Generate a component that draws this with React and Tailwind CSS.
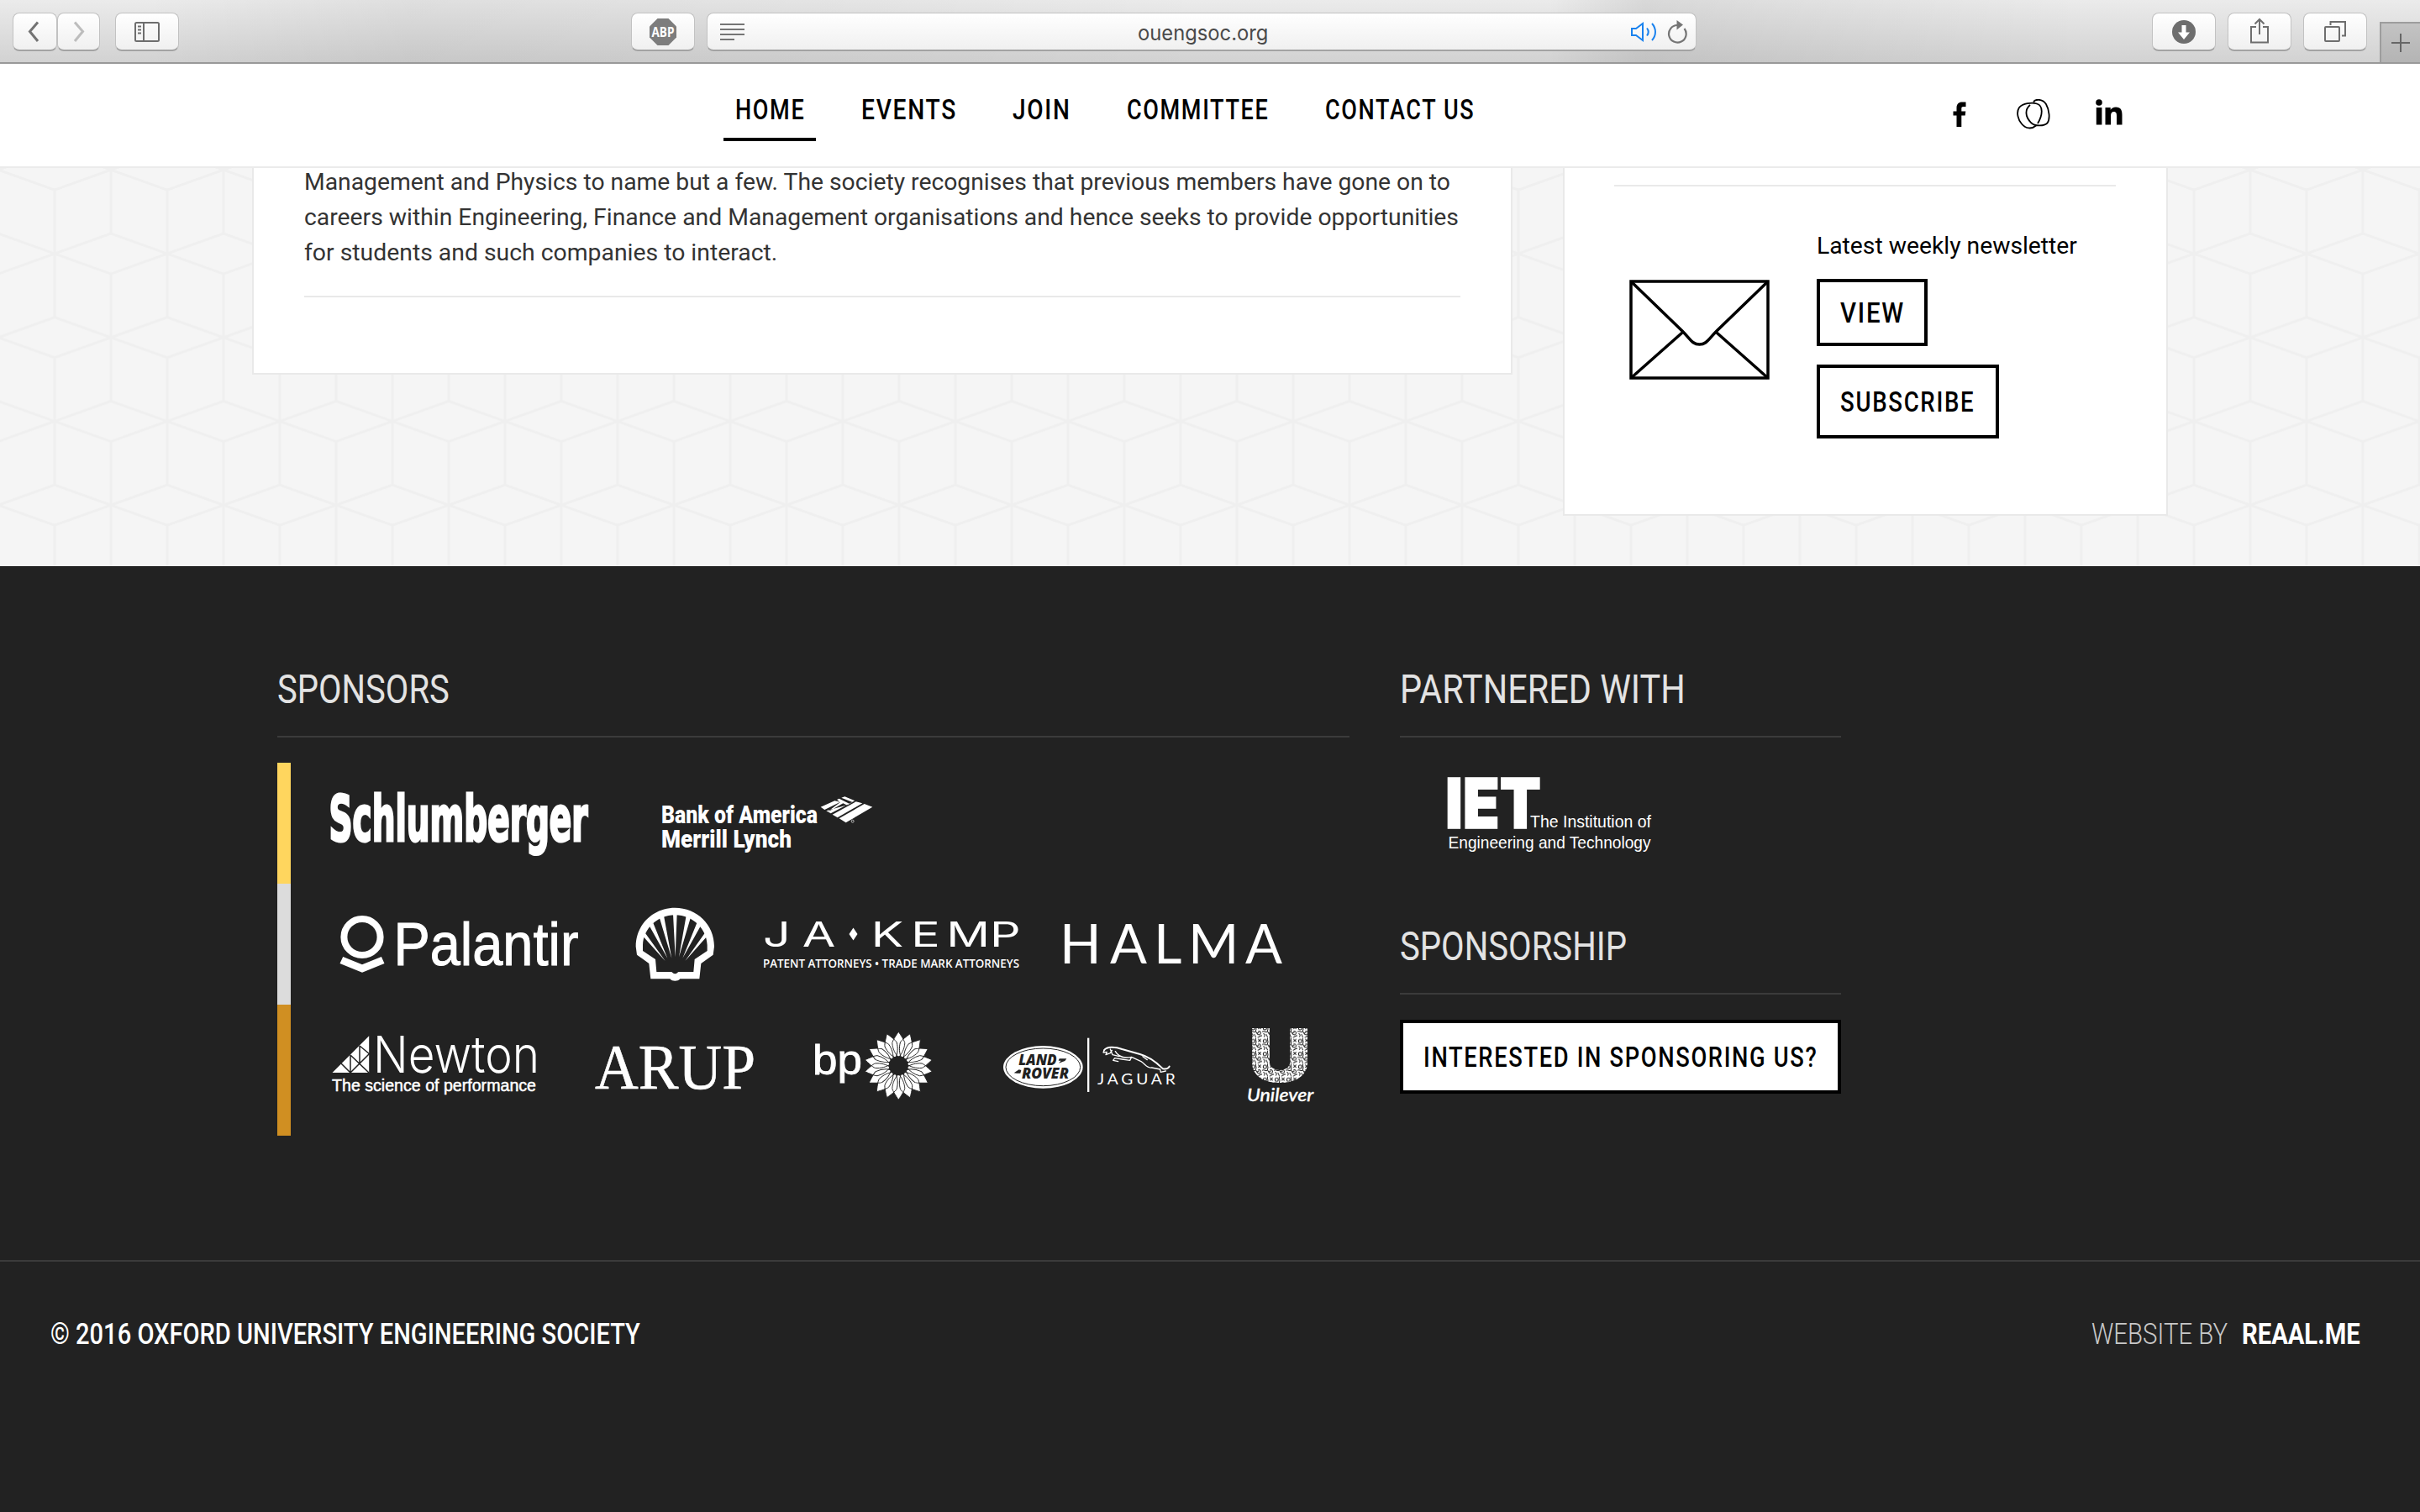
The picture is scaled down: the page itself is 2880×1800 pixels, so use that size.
import React, { useLayoutEffect, useRef } from "react";

/* Condenses a line of text horizontally so that it fills its box. */
function Fit({ children, className = "" }) {
  const box = useRef(null);
  const inner = useRef(null);
  useLayoutEffect(() => {
    const el = inner.current;
    const spacing = parseFloat(getComputedStyle(el).letterSpacing) || 0;
    el.style.transform = `scaleX(${box.current.clientWidth / (el.offsetWidth - spacing)})`;
  }, []);
  return (
    <span ref={box} className={`block whitespace-nowrap ${className}`}>
      <span ref={inner} className="inline-block origin-left">{children}</span>
    </span>
  );
}

/* Logo lettering stretched to a given width. */
function T({ x, y, w, size, children, font = "Liberation Sans", weight = 400, ...rest }) {
  return (
    <text x={x} y={y} textLength={w} lengthAdjust="spacingAndGlyphs" fontSize={size} fontFamily={`"${font}", sans-serif`} fontWeight={weight} {...rest}>
      {children}
    </text>
  );
}

function Logo({ box, label, className, children }) {
  return (
    <svg viewBox={box} role="img" aria-label={label} className={`block shrink-0 overflow-visible fill-white ${className}`}>
      {children}
    </svg>
  );
}

function ToolButton({ className = "", children }) {
  return (
    <button className={`flex h-[46px] shrink-0 items-center justify-center rounded-[8px] border border-b-2 border-[#c2c2c2] border-b-[#a3a3a3] bg-gradient-to-b from-white to-[#f0f0f0] ${className}`}>
      {children}
    </button>
  );
}

function Toolbar() {
  return (
    <header className="flex h-[76px] shrink-0 items-start border-b-2 border-[#999] bg-[linear-gradient(to_right,transparent_6%,rgba(0,0,0,0.05)_17%,rgba(0,0,0,0.03)_33%,transparent_50%,transparent_64%,rgba(0,0,0,0.08)_68%,rgba(0,0,0,0.05)_73%,transparent_86%),linear-gradient(to_bottom,#ebebeb,#d2d2d2)] pt-[15px] pl-[15px]">
      <ToolButton className="w-[53px]">
        <svg className="mr-[4px] h-[26px] w-[14px] fill-none stroke-[#737373]" viewBox="0 0 14 26" strokeWidth="3"><path d="M12 1.500 2.500 12.500 12 24" /></svg>
      </ToolButton>
      <ToolButton className="w-[51px]">
        <svg className="h-[26px] w-[14px] fill-none stroke-[#bdbdbd]" viewBox="0 0 14 26" strokeWidth="3"><path d="M2 1.500 11.500 12.500 2 24" /></svg>
      </ToolButton>
      <ToolButton className="ml-[18px] w-[76px]">
        <svg className="h-[24px] w-[30px] fill-none stroke-[#6e6e6e]" viewBox="0 0 30 24" strokeWidth="2">
          <rect x="1" y="1" width="28" height="22" rx="1.500" />
          <path d="M11 1v22M4 5.500h4M4 9.500h4M4 13.500h4" />
        </svg>
      </ToolButton>
      <ToolButton className="ml-[538px] w-[76px]">
        <svg className="h-[32px] w-[32px]" viewBox="0 0 32 32">
          <path d="M9.500 0h13L32 9.500v13L22.500 32h-13L0 22.500v-13z" className="fill-[#7d7d7d]" />
          <T x="2.500" y="21.500" w="27" size="15.500" font="Open Sans" weight="700" className="fill-white">ABP</T>
        </svg>
      </ToolButton>
      <div className="ml-[14px] flex h-[46px] w-[1178px] items-center rounded-[8px] border border-b-2 border-[#c2c2c2] border-b-[#a3a3a3] bg-gradient-to-b from-white to-[#f0f0f0] pr-[10px] pl-[15px]">
        <svg className="h-[22px] w-[29px] stroke-[#757575]" viewBox="0 0 29 22" strokeWidth="2"><path d="M0 2h29M0 8h29M0 14h29M0 20h17" /></svg>
        <span className="mt-[3px] ml-[468px] w-[155px] font-['Inter'] text-[25px] leading-[40px] text-[#4a4a4a]"><Fit>ouengsoc.org</Fit></span>
        <svg className="ml-auto h-[24px] w-[32px] fill-none stroke-[#1a82ee]" viewBox="0 0 32 24" strokeWidth="2"><path d="M1 8h5l8-6v20l-8-6H1zM19 7.500c2.300 3 2.300 6 0 9M25 2c5.300 6 5.300 14 0 20" /></svg>
        <svg className="ml-[11px] h-[28px] w-[24px] fill-none stroke-[#757575]" viewBox="0 0 24 28" strokeWidth="2.200"><path d="M20.500 10A10.300 10.300 0 1 1 12 6" /><path d="M11.500 0v11.500l7.500-6z" className="fill-[#757575] stroke-none" /></svg>
      </div>
      <ToolButton className="ml-[542px] w-[76px]">
        <svg className="h-[28px] w-[28px]" viewBox="0 0 28 28"><circle cx="14" cy="14" r="14" className="fill-[#6e6e6e]" /><path d="M11.500 6h5v8.500h4.500l-7 8.500-7-8.500h4.500z" className="fill-white" /></svg>
      </ToolButton>
      <ToolButton className="ml-[14px] w-[76px]">
        <svg className="mt-[-2px] h-[31px] w-[24px] fill-none stroke-[#6e6e6e]" viewBox="0 0 24 31" strokeWidth="2"><path d="M8 11H2v18.500h20V11h-6M12 20V2M6.500 7.500 12 2l5.500 5.500" /></svg>
      </ToolButton>
      <ToolButton className="ml-[14px] w-[76px]">
        <svg className="h-[25px] w-[26px] fill-none stroke-[#6e6e6e]" viewBox="0 0 26 25" strokeWidth="2"><rect x="1" y="7" width="17" height="17" rx="1" /><path d="M7.500 5V1H25v16.500h-4" /></svg>
      </ToolButton>
      <div className="mt-[11px] ml-[15px] flex h-[48px] flex-1 items-center justify-center border-t-2 border-l-2 border-[#9d9d9d] bg-gradient-to-b from-[#c3c3c3] to-[#b4b4b4]">
        <svg className="h-[22px] w-[22px] stroke-[#666]" viewBox="0 0 22 22" strokeWidth="2"><path d="M11 0v22M0 11h22" /></svg>
      </div>
    </header>
  );
}

const LINKS = [
  { label: "HOME", width: "w-[82px]", active: true },
  { label: "EVENTS", width: "w-[112px]" },
  { label: "JOIN", width: "w-[68px]" },
  { label: "COMMITTEE", width: "w-[168px]" },
  { label: "CONTACT US", width: "w-[177px]" },
];

function Nav() {
  return (
    <nav className="flex h-[124px] shrink-0 border-b-2 border-[#ebebeb] bg-white pl-[861px] font-['Roboto'] text-[33px] leading-[44px] font-medium tracking-[2px] text-black">
      <div className="flex gap-[40px] pt-[33px]">
        {LINKS.map((l) => (
          <a key={l.label} className={`h-[59px] px-[14px] ${l.active ? "border-b-4 border-black" : ""}`}>
            <Fit className={l.width}>{l.label}</Fit>
          </a>
        ))}
      </div>
      <div className="ml-auto flex pt-[42px] pr-[354px]">
        <svg className="mt-[3px] h-[30px] w-[16px] fill-black" viewBox="0 0 16 30"><path d="M15.500.500V6h-3c-1.600 0-2.200.700-2.200 2.200v3.300h5l-.600 5h-4.400V30H4.500V16.500H.500v-5h4V7.400C4.500 3 7 .500 11 .500z" /></svg>
        <svg className="ml-[60px] h-[36px] w-[40px] fill-none stroke-black" viewBox="0 0 40 36" strokeWidth="1.800">
          <path d="M20 3.500C22-.500 31-.500 35 6c4 7 5 18 1.500 22.500C33 32 22 33 17 28 9.500 20 10 12 16 7" />
          <path d="M25 29C31 19 32 8 24 5.500 18 3.500 7 5 3 10-1 16 2 25 6 29.500c5 6 12 6.500 17 2" />
        </svg>
        <svg className="ml-[54px] h-[31px] w-[32px] fill-black" viewBox="0 0 32 31"><circle cx="4" cy="4" r="3.800" /><path d="M.800 10h6.600v20.500H.800zM11.500 10h6.200v2.800c1.200-2 3.300-3.300 6.300-3.300 6 0 7.500 3.700 7.500 9.300v11.700H25V20c0-2.500-.300-5-3.300-5s-3.600 2.400-3.600 5v10.500h-6.600z" /></svg>
      </div>
    </nav>
  );
}

function HexBackdrop() {
  return (
    <svg aria-hidden="true" className="absolute inset-0 h-full w-full">
      <defs>
        <pattern id="cubes" width="134" height="199.600" patternUnits="userSpaceOnUse" x="-2" y="1">
          <g className="fill-none stroke-[#efefef]" strokeWidth="3">
            <path d="M-67 101 0 77l67 24L0 125zM67 101l67-24 67 24-67 24z" />
            <path d="M0 1.200l67-24 67 24-67 24zM0 200.800l67-24 67 24-67 24z" />
            <path d="M67 25v151.600M0 -1v78M0 125v76M134 -1v78M134 125v76" />
          </g>
        </pattern>
      </defs>
      <rect width="100%" height="100%" fill="url(#cubes)" />
    </svg>
  );
}

function Main() {
  return (
    <main className="relative flex h-[474px] shrink-0 items-start overflow-hidden bg-[#f5f5f5] pl-[300px] font-['Roboto'] text-[28px] leading-[42px]">
      <HexBackdrop />
      <article className="relative h-[246px] w-[1500px] border-x-2 border-b-2 border-[#e9e9e9] bg-white px-[60px] text-[#333]">
        <div className="-mt-[4px]">
          <Fit className="w-[1364px]">Management and Physics to name but a few. The society recognises that previous members have gone on to</Fit>
          <Fit className="w-[1374px]">careers within Engineering, Finance and Management organisations and hence seeks to provide opportunities</Fit>
          <Fit className="w-[563px]">for students and such companies to interact.</Fit>
        </div>
        <hr className="mt-[30px] border-t-2 border-[#e9e9e9]" />
      </article>
      <aside className="relative ml-[60px] h-[414px] w-[720px] border-x-2 border-b-2 border-[#e9e9e9] bg-white px-[59px] pt-[20px]">
        <hr className="w-[597px] border-t-2 border-[#e9e9e9]" />
        <div className="flex pt-[50px] pl-[18px] text-black">
          <svg className="mt-[61px] h-[119px] w-[167px] fill-none stroke-black" viewBox="0 0 167 119" strokeWidth="3.500">
            <rect x="2" y="2" width="163" height="115" />
            <path d="M2 2l61 59c10 10 12 16 20.500 16s10.500-6 20.500-16l61-59M2 117l61-54M165 117l-61-54" />
          </svg>
          <div className="ml-[56px]">
            <Fit className="w-[310px]">Latest weekly newsletter</Fit>
            <div className="mt-[18px] flex flex-col items-start gap-[22px] text-[33px] leading-[44px] font-medium tracking-[2px]">
              <button className="h-[80px] w-[132px] border-4 border-black pt-[2px] pl-[24px]"><Fit className="w-[75px]">VIEW</Fit></button>
              <button className="h-[88px] w-[217px] border-4 border-black pt-[2px] pl-[24px]"><Fit className="w-[159px]">SUBSCRIBE</Fit></button>
            </div>
          </div>
        </div>
      </aside>
    </main>
  );
}

function Schlumberger() {
  return (
    <Logo label="Schlumberger" box="390 908 320 144" className="h-[144px] w-[320px]">
      <T x="391.500" y="1001" w="308" size="74" font="DejaVu Sans Condensed" weight="700" className="stroke-white" strokeWidth="3">Schlumberger</T>
    </Logo>
  );
}

function BankOfAmerica() {
  return (
    <Logo label="Bank of America Merrill Lynch" box="780 908 270 144" className="h-[144px] w-[270px]">
      <T x="787" y="980" w="186" size="29" font="Roboto" weight="900">Bank of America</T>
      <T x="787" y="1008.700" w="155" size="29" font="Roboto" weight="900">Merrill Lynch</T>
      <g transform="translate(740 930) scale(0.33333)">
        <path d="M776 133 800 148 895 92 866 81zM752 119 770 130 859 79 836 73zM730 106 746 115 829 71 808 84zM710 92 724 102 780 74 760 70zM768 66 776 62 812 80 802 85 790 79 748 103 736 108 780 75zM784 59 796 55 832 70 822 74z" />
        <circle cx="824" cy="143" r="4.500" className="fill-none stroke-white" strokeWidth="2" />
      </g>
    </Logo>
  );
}

function Palantir() {
  return (
    <Logo label="Palantir" box="400 1052 300 144" className="h-[144px] w-[300px]">
      <circle cx="431" cy="1115.500" r="21.600" className="fill-none stroke-white" strokeWidth="8" />
      <path d="M408.200 1139 431 1148.300 453.900 1139 457.500 1147 431 1157.700 404.500 1147z" />
      <T x="468.500" y="1149.300" w="220" size="72" className="stroke-white" strokeWidth="1">Palantir</T>
    </Logo>
  );
}

function Shell() {
  return (
    <Logo label="Shell" box="750 1052 105 144" className="h-[144px] w-[105px]">
      <g transform="translate(740 930) scale(0.33333)">
        <path fillRule="evenodd" d="M190 452C268 452 330 512 330 590L326 620 283 651 277 706H208C203 713 197 713 190 713S177 713 172 706H103L97 651 54 620 50 590C50 512 112 452 190 452zM190 478C125 478 76 530 75 585V606L120 636 124 681H176C180 681 184 688 190 688S200 681 204 681H256L260 636 305 606V585C304 530 255 478 190 478z" />
        <path d="M183 474h14L191 628zM134 486l16-6L178 632zM230 480l16 6L204 628zM98 516l14-10L163 632zM268 506l14 10L217 632zM74 552l8-12L155 642zM298 540l8 12L226 642z" />
      </g>
    </Logo>
  );
}

function JaKemp() {
  return (
    <Logo label="J A Kemp" box="900 1052 320 144" className="h-[144px] w-[320px]">
      <g transform="translate(0 1126.700) scale(1.400 1)">
        <text x="648.500 682" y="0" fontSize="41" fontFamily='"Inter", sans-serif' fontWeight="400">JA</text>
        <text x="740.500 774.500 804.500 841.500" y="0" fontSize="41" fontFamily='"Inter", sans-serif' fontWeight="400">KEMP</text>
      </g>
      <path d="M1015.500 1104.500l5 7.500-5 7.500-5-7.500z" />
      <T x="908" y="1151.700" w="305" size="14" font="Open Sans" weight="600">PATENT ATTORNEYS • TRADE MARK ATTORNEYS</T>
    </Logo>
  );
}

function Halma() {
  return (
    <Logo label="Halma" box="1255 1052 280 144" className="h-[144px] w-[280px]">
      <text x="1261 1321 1373 1414 1482" y="1147.300" fontSize="65" fontFamily='"Lato", sans-serif' fontWeight="400">HALMA</text>
    </Logo>
  );
}

function Newton() {
  return (
    <Logo label="Newton" box="390 1196 255 156" className="h-[156px] w-[255px]">
      <path d="M395.500 1277 439.200 1233.300V1277z" />
      <path d="M406 1266l11 11 22.500-22.500M417 1256v21M428 1245v21M417 1256l22 21M428 1245l12 10" className="fill-none stroke-[#222]" strokeWidth="1.500" />
      <T x="444" y="1277" w="198" size="61" font="Inter" weight="300">Newton</T>
      <T x="395" y="1299.300" w="243" size="20" className="stroke-white" strokeWidth="0.500">The science of performance</T>
    </Logo>
  );
}

function Arup() {
  return (
    <Logo label="Arup" box="700 1196 205 156" className="h-[156px] w-[205px]">
      <T x="708" y="1296" w="191" size="77" font="Liberation Serif" className="stroke-white" strokeWidth="0.600">ARUP</T>
    </Logo>
  );
}

const PETALS = Array.from({ length: 18 }, (_, i) => i * 20);

function Bp() {
  const petal = "M0 -40.500C3 -36 7 -30 7.500 -27 7 -20 4 -14 0 -10 -4 -14 -7 -20 -7.500 -27 -7 -30 -3 -36 0 -40.500z";
  return (
    <Logo label="BP" box="965 1196 150 156" className="h-[156px] w-[150px]">
      <T x="967" y="1279" w="59" size="50" className="stroke-white" strokeWidth="0.800">bp</T>
      <g transform="translate(1069.300 1268.700)">
        {PETALS.map((a) => <path key={a} d={petal} transform={`rotate(${a})`} />)}
        {PETALS.map((a) => <path key={a} d={petal} transform={`rotate(${a})`} className="fill-none stroke-[#222]" strokeWidth="0.900" />)}
        <circle r="11.500" className="fill-[#222]" />
      </g>
    </Logo>
  );
}

function LandRoverJaguar() {
  return (
    <Logo label="Land Rover Jaguar" box="1190 1196 215 156" className="h-[156px] w-[215px]">
      <g transform="translate(1180 1205) scale(0.33333)">
        <ellipse cx="184" cy="196" rx="142" ry="76" />
        <ellipse cx="184" cy="196" rx="133" ry="67" className="fill-none stroke-[#222]" strokeWidth="3" />
        <g className="fill-[#222]">
          <T x="97" y="188" w="136" size="50" font="Open Sans" weight="800" fontStyle="italic">LAND</T>
          <T x="108" y="236" w="168" size="52" font="Open Sans" weight="800" fontStyle="italic">ROVER</T>
          <path d="M242 166h26l-6 8-22 8 8-9h-9zM80 217l18-12 8 2-3 11H90z" />
        </g>
        <rect x="342" y="92" width="7" height="193" />
        <T x="378" y="259" w="290" size="50" font="Lato" letterSpacing="10">JAGUAR</T>
        <g className="fill-none stroke-white" strokeLinecap="round" strokeLinejoin="round">
          <path strokeWidth="6" d="M402 136C410 122 440 122 466 132L530 150C560 158 590 180 612 202 625 204 632 200 635 194" />
          <path strokeWidth="4" d="M402 136L399 144 412 142 408 152 424 146 430 136M424 132L432 152 456 158M442 140C452 158 470 166 500 160L534 176C548 184 556 202 572 198L602 204M500 160L494 172 466 168 440 164 434 172 452 176M540 158L556 170M602 204L604 214 622 210" />
        </g>
      </g>
    </Logo>
  );
}

function Unilever() {
  return (
    <Logo label="Unilever" box="1480 1196 90 156" className="h-[156px] w-[90px]">
      <defs>
        <pattern id="motifs" width="42" height="46" patternUnits="userSpaceOnUse">
          <rect width="42" height="46" fill="#fff" />
          <g className="fill-none stroke-[#222]" strokeWidth="3">
            <circle cx="10" cy="11" r="6" />
            <path d="M20 0c-4 8 4 10 0 18s6 8 4 14M28 4l10 10M38 4L28 14M0 24c8-6 12 4 18 0M4 30c6 2 8 8 2 12M14 32l6 12M28 22c12-4 12 14 2 12s-4-8 2-8M42 38c-8-2-10 6-16 6" />
          </g>
        </pattern>
      </defs>
      <g transform="translate(1180 1205) scale(0.33333)">
        <T x="916" y="250" w="227" size="264" font="Inter" weight="900" fill="url(#motifs)">U</T>
        <T x="912" y="318" w="238" size="62" font="Lato" weight="500" fontStyle="italic" className="stroke-white" strokeWidth="1">Unilever</T>
      </g>
    </Logo>
  );
}

function Iet() {
  return (
    <Logo label="The Institution of Engineering and Technology" box="1666 878 525 219" className="h-[219px] w-[525px]">
      <T x="1720" y="986" w="114" size="83" font="Inter" weight="900" className="stroke-white" strokeWidth="1.500">IET</T>
      <T x="1821" y="985" w="144" size="21">The Institution of</T>
      <T x="1723.500" y="1009.600" w="241" size="21">Engineering and Technology</T>
    </Logo>
  );
}

function Heading({ width, children }) {
  return (
    <h2 className="border-b-2 border-[#3b3b3b] pb-[25px] text-[49px] leading-[60px] font-normal text-[#e3e3e3]">
      <Fit className={width}>{children}</Fit>
    </h2>
  );
}

function Footer() {
  return (
    <footer className="flex flex-1 flex-col bg-[#222] font-['Roboto'] text-white">
      <div className="flex h-[826px] shrink-0 pt-[117px] pl-[330px]">
        <section className="w-[1276px]">
          <Heading width="w-[205px]">SPONSORS</Heading>
          <div className="mt-[30px] flex h-[144px] border-l-[16px] border-[#ffd65e] pl-[44px]">
            <Schlumberger />
            <div className="ml-[70px]"><BankOfAmerica /></div>
          </div>
          <div className="flex h-[144px] border-l-[16px] border-[#dcdcdc] pl-[54px]">
            <Palantir />
            <div className="ml-[50px]"><Shell /></div>
            <div className="ml-[45px]"><JaKemp /></div>
            <div className="ml-[35px]"><Halma /></div>
          </div>
          <div className="flex h-[156px] border-l-[16px] border-[#d08f22] pl-[44px]">
            <Newton />
            <div className="ml-[55px]"><Arup /></div>
            <div className="ml-[60px]"><Bp /></div>
            <div className="ml-[75px]"><LandRoverJaguar /></div>
            <div className="ml-[75px]"><Unilever /></div>
          </div>
        </section>
        <section className="ml-[60px] w-[525px]">
          <Heading width="w-[340px]">PARTNERED WITH</Heading>
          <Iet />
          <Heading width="w-[270px]">SPONSORSHIP</Heading>
          <button className="mt-[30px] flex h-[88px] w-full items-center border-4 border-black bg-white pt-[2px] pl-[24px] text-left text-[33px] leading-[44px] font-medium tracking-[2px] text-black">
            <Fit className="w-[468px]">INTERESTED IN SPONSORING US?</Fit>
          </button>
        </section>
      </div>
      <div className="flex flex-1 border-t-2 border-[#3b3b3b] pt-[65px] pr-[71px] pl-[60px] text-[35px] leading-[44px]">
        <Fit className="w-[702px] font-medium">© 2016 OXFORD UNIVERSITY ENGINEERING SOCIETY</Fit>
        <Fit className="ml-auto w-[162px] font-light text-[#c9c9c9]">WEBSITE BY</Fit>
        <Fit className="ml-[17px] w-[141px] font-bold">REAAL.ME</Fit>
      </div>
    </footer>
  );
}

export default function App() {
  return (
    <div className="flex h-[1800px] w-[2880px] flex-col overflow-hidden">
      <Toolbar />
      <Nav />
      <Main />
      <Footer />
    </div>
  );
}
